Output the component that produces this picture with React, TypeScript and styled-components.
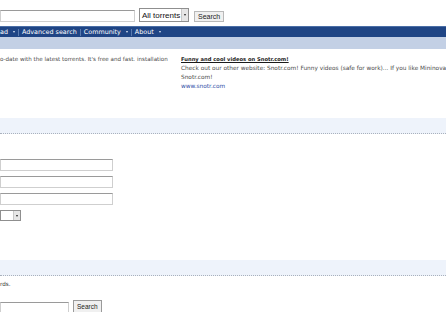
import styled, { createGlobalStyle } from 'styled-components'

const GlobalStyle = createGlobalStyle`
  html, body {
    margin: 0;
    padding: 0;
    background: #fff;
    overflow: hidden;
  }
  body {
    font-family: "DejaVu Sans", Verdana, sans-serif;
    color: #444;
  }
`

const Page = styled.div`
  width: 446px;
  height: 312px;
  overflow: hidden;
`

const Header = styled.div`
  height: 26px;
  display: flex;
  align-items: flex-start;
  padding-top: 8px;
  box-sizing: border-box;
`

const TextInput = styled.input<{ $w: number }>`
  width: ${p => p.$w}px;
  height: 12px;
  box-sizing: border-box;
  margin: 0;
  padding: 0 2px;
  border: 1px solid #cfcfcf;
  border-top-color: #9a9a9a;
  background: #fff;
  outline: none;
`

const SelectBox = styled.div<{ $w: number; $h: number }>`
  width: ${p => p.$w}px;
  height: ${p => p.$h}px;
  box-sizing: border-box;
  border: 1px solid #8f8f8f;
  display: flex;
  align-items: center;
  justify-content: space-between;
  background: #fff;
  font-family: "Liberation Sans", Arial, sans-serif;
  font-size: 8px;
  color: #111;
  padding-left: 2px;
  white-space: nowrap;
`

const ArrowBtn = styled.span`
  width: 7px;
  height: 100%;
  flex: none;
  box-sizing: border-box;
  border-left: 1px solid #c8c8c8;
  background: #e6e6e6;
  display: flex;
  align-items: center;
  justify-content: center;

  &:after {
    content: '';
    border-left: 1.5px solid transparent;
    border-right: 1.5px solid transparent;
    border-top: 2px solid #222;
  }
`

const Button = styled.button`
  height: 11px;
  box-sizing: border-box;
  margin: 0;
  padding: 0 3px;
  border: 1px solid #b8b8b8;
  background: #f0f0f0;
  font-family: "Liberation Sans", Arial, sans-serif;
  font-size: 7px;
  line-height: 9px;
  color: #222;
`

const TopSearch = styled.div`
  display: flex;
  align-items: center;
  gap: 4px;
  margin-top: 1px;

  ${SelectBox} {
    margin-top: -1px;
  }
  ${Button} {
    margin-left: 1px;
    margin-top: 1px;
  }
`

const Nav = styled.div`
  height: 11px;
  box-sizing: border-box;
  background: #1f4585;
  border-top: 1px solid #4a6ea6;
  display: flex;
  align-items: center;
  color: #fff;
  font-size: 6.4px;
  white-space: nowrap;
`

const NavItem = styled.span<{ $arrow?: boolean }>`
  display: flex;
  align-items: center;
  padding: 0 3px;
  border-right: 1px solid #5a7bb0;
  height: 7px;
  line-height: 7px;

  &:first-child {
    padding-left: 0;
  }
  &:last-child {
    border-right: none;
  }
  ${p => p.$arrow && `
    &:after {
      content: '';
      margin-left: 5px;
      border-left: 1.6px solid transparent;
      border-right: 1.6px solid transparent;
      border-top: 2px solid #dde6f3;
    }
  `}
`

const SubNav = styled.div`
  height: 12px;
  background: #c3d0e5;
`

const Intro = styled.div`
  display: flex;
  padding-top: 6px;
  height: 69px;
  box-sizing: border-box;
  font-size: 5.6px;
  line-height: 9px;
  white-space: nowrap;
`

const IntroText = styled.div`
  width: 181px;
  flex: none;
  color: #4a4a4a;
`

const Promo = styled.div`
  display: flex;
  flex-direction: column;
  color: #4a4a4a;
  font-size: 5.8px;
`

const PromoTitle = styled.span`
  font-weight: bold;
  font-size: 5.2px;
  text-decoration: underline;
  color: #1a1a1a;
`

const PromoLink = styled.span`
  color: #3150a8;
`

const SectionBar = styled.div`
  height: 16px;
  box-sizing: border-box;
  background: #eef3fb;
  border-bottom: 1px dotted #a9b1bd;
`

const FormArea = styled.div`
  height: 126px;
  padding-top: 25px;
  box-sizing: border-box;
  display: flex;
  flex-direction: column;
  gap: 5px;
`

const Note = styled.div`
  font-size: 5.6px;
  color: #333;
  height: 24px;
  padding-top: 5px;
  box-sizing: border-box;
`

const BottomSearch = styled.div`
  display: flex;
  align-items: flex-start;
  gap: 4px;

  ${TextInput} {
    margin-top: 2px;
  }
  ${Button} {
    height: 13px;
    border-color: #9a9a9a;
    font-size: 6.5px;
  }
`

export default function App() {
  return (
    <Page>
      <GlobalStyle />
      <Header>
        <TopSearch>
          <TextInput $w={135} />
          <SelectBox $w={50} $h={14}>
            <span>All torrents</span>
            <ArrowBtn />
          </SelectBox>
          <Button>Search</Button>
        </TopSearch>
      </Header>
      <Nav>
        <NavItem $arrow>ad</NavItem>
        <NavItem>Advanced search</NavItem>
        <NavItem $arrow>Community</NavItem>
        <NavItem $arrow>About</NavItem>
      </Nav>
      <SubNav />
      <Intro>
        <IntroText>o-date with the latest torrents. It's free and fast. installation</IntroText>
        <Promo>
          <PromoTitle>Funny and cool videos on Snotr.com!</PromoTitle>
          <span>Check out our other website: Snotr.com! Funny videos (safe for work)... If you like Mininova</span>
          <span>Snotr.com!</span>
          <PromoLink>www.snotr.com</PromoLink>
        </Promo>
      </Intro>
      <SectionBar />
      <FormArea>
        <TextInput $w={113} />
        <TextInput $w={113} />
        <TextInput $w={113} />
        <SelectBox $w={21} $h={11}>
          <span />
          <ArrowBtn />
        </SelectBox>
      </FormArea>
      <SectionBar />
      <Note>rds.</Note>
      <BottomSearch>
        <TextInput $w={69} />
        <Button>Search</Button>
      </BottomSearch>
    </Page>
  )
}
